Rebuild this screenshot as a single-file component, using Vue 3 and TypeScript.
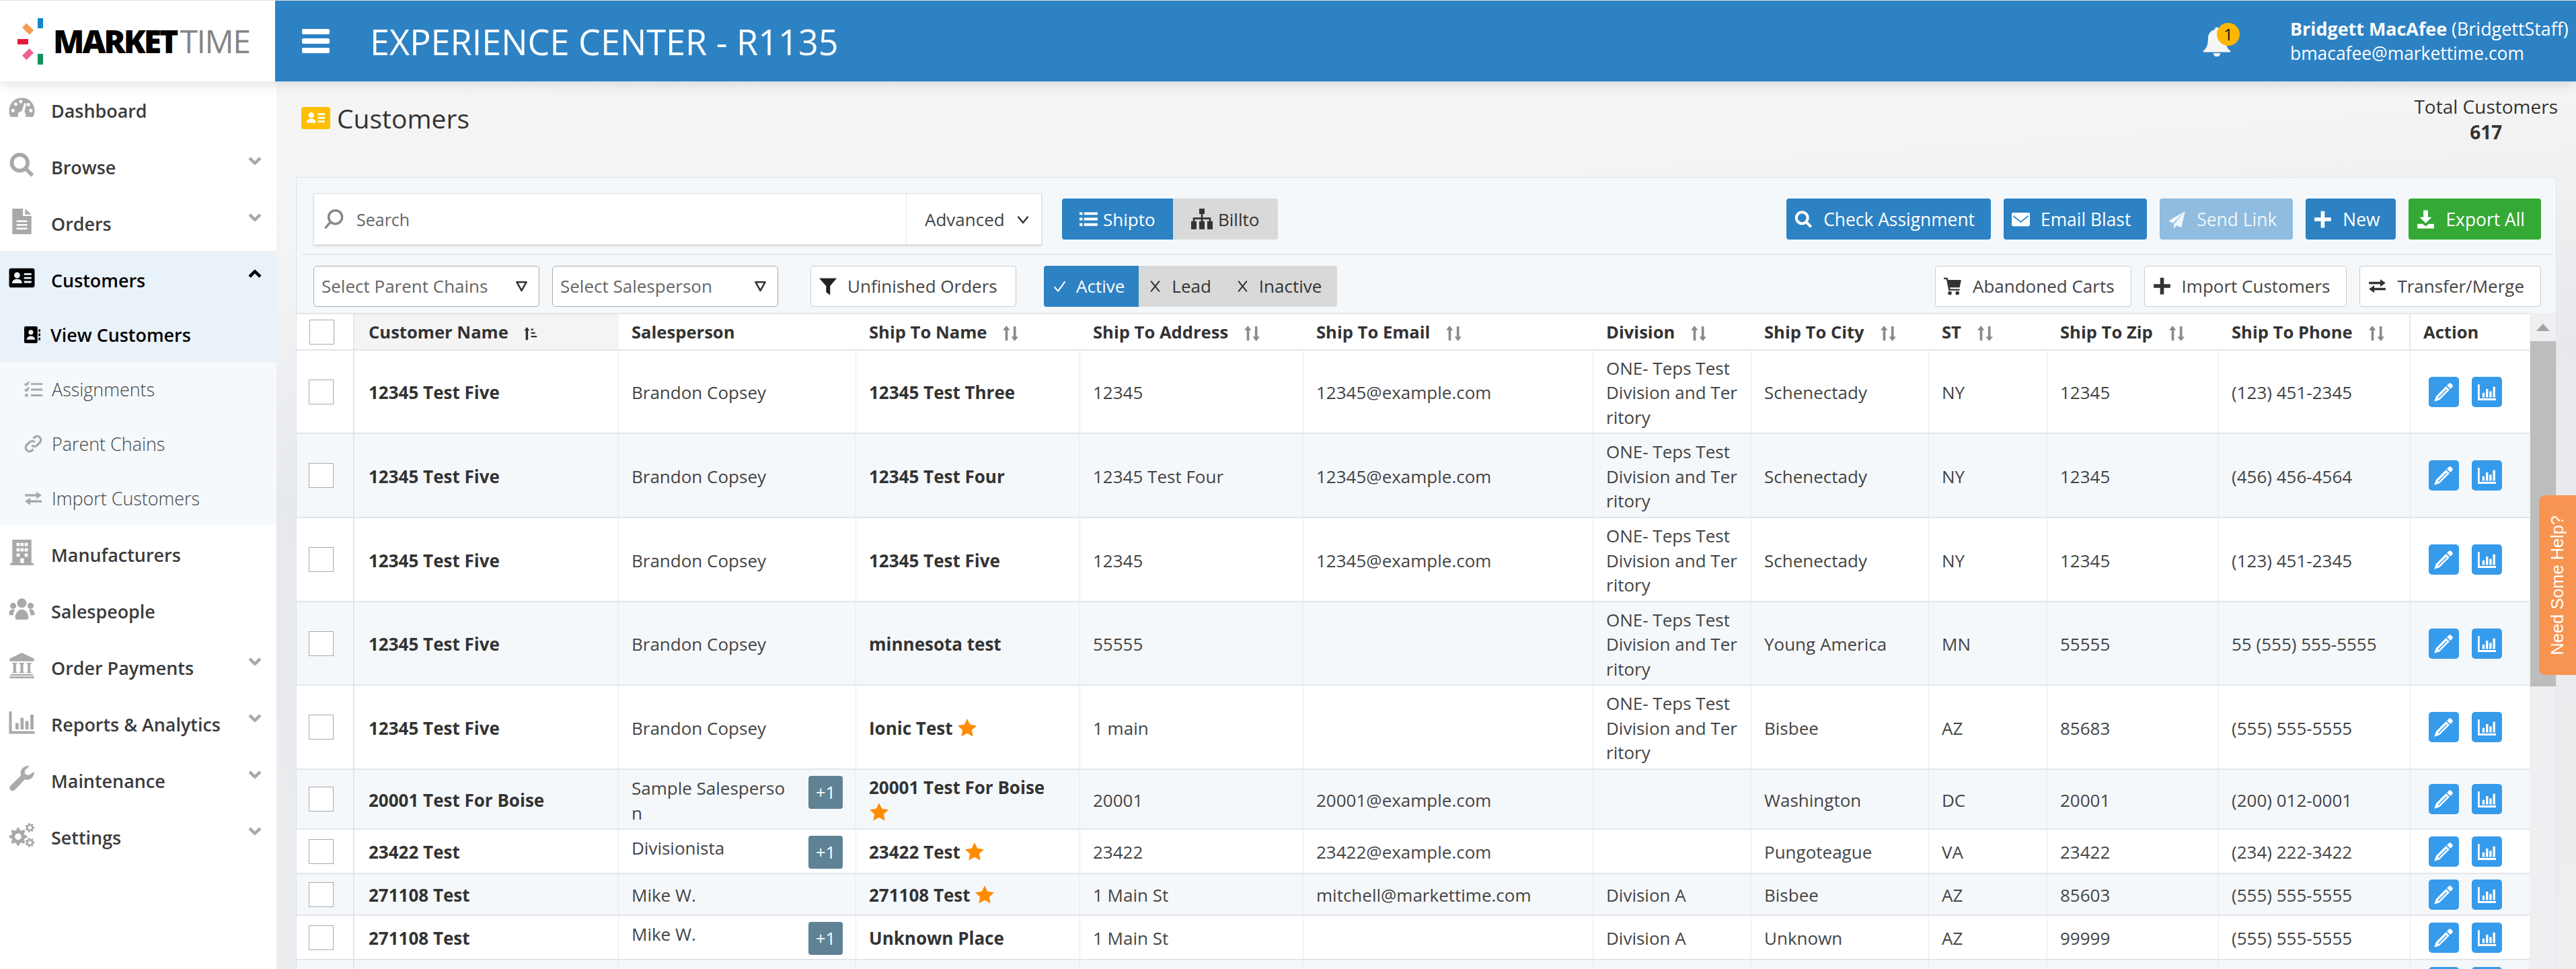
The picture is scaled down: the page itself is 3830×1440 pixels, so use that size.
<script setup lang="ts">
import { h } from 'vue';

// circle as a sub path, so it can be cut out of a filled shape
const circ = (x: number, y: number, r: number) =>
  `M${x - r} ${y}a${r} ${r} 0 1 0 ${2 * r} 0a${r} ${r} 0 1 0 ${-2 * r} 0z`;

const gear = (cx: number, cy: number, r: number, teeth: number) => {
  let d = '';
  const step = (Math.PI * 2) / (teeth * 4);
  for (let i = 0; i < teeth * 4; i++) {
    const rad = i % 4 < 2 ? r : r * 0.74;
    const a = step * i - step / 2;
    d += `${i ? 'L' : 'M'}${(cx + rad * Math.cos(a)).toFixed(2)} ${(cy + rad * Math.sin(a)).toFixed(2)}`;
  }
  return `${d}z${circ(cx, cy, r * 0.36)}`;
};

const cardMark =
  `${circ(7.5, 9.5, 2.8)}M2.8 17c0-2.6 2-3.9 4.7-3.9s4.7 1.3 4.7 3.9z` +
  'M14 7.5h7v1.8h-7zM14 11.2h7V13h-7zM14 14.9h7v1.8h-7z';
const chart = 'M0 2h2.5v18.5H24V23H0zM6 13h3v6H6zM10.7 8h3v11h-3zM15.3 11h3v8h-3zM20 5h3v14h-3z';

type Glyph = { f?: string; s?: string; w?: number };
const glyphs: Record<string, Glyph> = {
  gauge: {
    f:
      'M12 2C5.4 2 0 7.4 0 14c0 2.2.5 4.2 1.5 6h21c1-1.8 1.5-3.8 1.5-6C24 7.4 18.6 2 12 2z' +
      circ(3.6, 14, 1.6) + circ(6.2, 8, 1.6) + circ(11, 5.6, 1.6) + circ(20.4, 14, 1.6) + circ(18.2, 8.5, 1.6) +
      'M14.4 7l1.8.5-1.8 8c.8.6 1.3 1.6 1.3 2.7 0 .6-.1 1.2-.4 1.8H8.7c-.3-.6-.4-1.2-.4-1.8 0-2 1.6-3.4 3.6-3.5z',
  },
  search: { s: `${circ(10, 10, 7.5)}M15.5 15.5L22 22`, w: 3.6 },
  searchThin: { s: `${circ(14, 9.5, 7.5)}M8.5 15L2.5 22`, w: 2.6 },
  file: { f: 'M3 0h10v7h8v17H3zM15 0l6 5.5h-6zM7 11h10v1.6H7zM7 14.5h10v1.6H7zM7 18h10v1.6H7z' },
  idcard: { f: `M2 3h20a2 2 0 0 1 2 2v14a2 2 0 0 1-2 2H2a2 2 0 0 1-2-2V5a2 2 0 0 1 2-2z${cardMark}` },
  idmark: { f: cardMark },
  addrbook: {
    f:
      `M2 0h15a2 2 0 0 1 2 2v20a2 2 0 0 1-2 2H2a2 2 0 0 1-2-2V2a2 2 0 0 1 2-2z${circ(9.5, 8.5, 3.4)}` +
      'M3.5 19c0-3.4 2.6-5.2 6-5.2s6 1.8 6 5.2zM20.5 4H23v4h-2.5zM20.5 10H23v4h-2.5zM20.5 16H23v4h-2.5z',
  },
  tasks: { f: circ(3, 20, 2.2), s: 'M9 5h15M9 12.5h15M9 20h15M.8 4.5l2 2 3.4-4.4M.8 12l2 2 3.4-4.4', w: 2.6 },
  link: { s: 'M10 14a5 5 0 0 0 7 0l4-4a5 5 0 0 0-7-7l-2 2M14 10a5 5 0 0 0-7 0l-4 4a5 5 0 0 0 7 7l2-2', w: 3 },
  exchange: { f: 'M1 6.5h15V3l7 5-7 5V9.5H1zM23 14.5H8V11l-7 5 7 5v-3.5h15z' },
  building: {
    f:
      'M3 0h18v22H3zM7 3h3v3H7zM10.8 3h3v3h-3zM14.6 3h3v3h-3zM7 8h3v3H7zM10.8 8h3v3h-3zM14.6 8h3v3h-3zM7 13h3v3H7zM14.6 13h3v3h-3zM10.5 17.5h3.5V22h-3.5zM1 22h22v2H1z',
  },
  users: {
    f:
      circ(12, 6.5, 4.4) + circ(3.8, 9, 2.9) + circ(20.2, 9, 2.9) +
      'M5.8 20.5c0-4.5 2.5-8 6.2-8s6.2 3.5 6.2 8c0 1-.8 1.5-1.8 1.5H7.6c-1 0-1.8-.5-1.8-1.5z' +
      'M0 16.5c0-2.6 1.5-4.2 3.8-4.2.7 0 1.3.2 1.7.5-1 1.4-1.5 3-1.7 5H1c-.6 0-1-.5-1-1.3z' +
      'M24 16.5c0-2.6-1.5-4.2-3.8-4.2-.7 0-1.3.2-1.7.5 1 1.4 1.5 3 1.7 5H23c.6 0 1-.5 1-1.3z',
  },
  bank: {
    f:
      'M12 0l11.5 5.5V8H.5V5.5zM3 9.5h4.5v1h-1V18h1v1H3v-1h1v-7.5H3zM9.7 9.5h4.6v1h-1V18h1v1H9.7v-1h1v-7.5h-1zM16.5 9.5H21v1h-1V18h1v1h-4.5v-1h1v-7.5h-1zM1.5 20h21v1.5h-21zM.5 22.3h23V24H.5z',
  },
  chart: { f: chart },
  wrench: {
    f:
      'M23.5 5.5c.4 3-1.5 6.5-5 7.5-1.4.4-2.6.2-3.8-.2L5.5 22.5c-1.3 1.3-3.2 1.2-4.2.2s-1.2-3 .2-4.3l9.7-9.2c-.5-1.3-.6-2.7-.2-4C12 1.8 15.5-.2 19 .3l-4.5 4.5.7 3.3 3.3.8z',
  },
  cogs: { f: gear(8.5, 13.5, 8.5, 8) + gear(19.5, 5, 4.5, 7) + gear(19.5, 19, 4.5, 7) },
  chevron: { s: 'M2.5 7l9.5 9.5L21.5 7', w: 5.5 },
  chevronUp: { s: 'M2.5 17L12 7.5l9.5 9.5', w: 5.5 },
  vee: { s: 'M3 7l9 11 9-11', w: 3 },
  caret: { s: 'M3 4h18L12 20z', w: 3.2 },
  funnel: { f: 'M0 1h24l-9 10.5V24l-5.5-4V11.5z' },
  list: { f: 'M0 3h4v3.5H0zM6 3h18v3.5H6zM0 10.3h4v3.5H0zM6 10.3h18v3.5H6zM0 17.5h4V21H0zM6 17.5h18V21H6z' },
  sitemap: {
    f: 'M9 0h6v6H9zM11 6h2v4h9v4h-2v-2h-7v2h-2v-2H4v2H2v-4h9zM0 14h6v9H0zM9 14h6v9H9zM18 14h6v9h-6z',
  },
  check: { s: 'M2 13l7 8L22 3', w: 2.6 },
  cross: { s: 'M4 2l16 20M20 2L4 22', w: 2.6 },
  mail: {
    f: 'M2 3h20a2 2 0 0 1 2 2v14a2 2 0 0 1-2 2H2a2 2 0 0 1-2-2V5a2 2 0 0 1 2-2zM2 6.5l10 8 10-8v2l-10 8-10-8z',
  },
  plane: { f: 'M23 1L1 14l6 3zM23 1L8 18.5V24l4-4 6 3z' },
  plus: { f: 'M9.5 1h5v8.5H23v5h-8.5V23h-5v-8.5H1v-5h8.5z' },
  download: { f: 'M9 0h6v9h5l-8 8-8-8h5zM1 18h7l4 3 4-3h7v6H1z' },
  cart: { f: `M0 1h5l1 3h17l-2 10H8l.5 2H21v2H6.5L3.5 3H0z${circ(8, 21.3, 2.5)}${circ(18, 21.3, 2.5)}` },
  pencil: {
    f:
      'M17.5 2.5a2 2 0 0 1 3 0l1 1a2 2 0 0 1 0 3l-2 2-4-4zM14.5 5.5l4 4L7 21l-6 2 2-6z' +
      'M15 8.7l.8.8-9.8 9.8-.8-.8z',
  },
  sortBoth: { f: 'M6 1l5 6.5H8V22H4.5V7.5H1zM18 23l-5-6.5h3.2V2h3.5v14.5H23z' },
  sortAsc: { f: 'M5 1l4.5 6H7v16H3V7H.5zM12 4h4v2.5h-4zM12 10h7v2.5h-7zM12 16h10v2.5H12z' },
  bell: {
    f:
      'M12 0a1.6 1.6 0 0 1 1.6 1.8C17 2.6 19.5 5.5 19.5 9.5c0 6 1.5 8.5 4 10.5v1.2H.5V20c2.5-2 4-4.5 4-10.5 0-4 2.5-6.9 5.9-7.7A1.6 1.6 0 0 1 12 0zM9 22a3 3 0 0 0 6 0z',
  },
  star: { f: 'M12 0l3.6 7.6 8.4 1.1-6.1 5.8 1.6 8.3L12 18.7l-7.5 4.1 1.6-8.3L0 8.7l8.4-1.1z' },
};

const Icon = (props: { name: string }) => {
  const g = glyphs[props.name];
  return h('svg', { viewBox: '0 0 24 24', class: 'ico' }, [
    g.f ? h('path', { d: g.f, fill: 'currentColor', 'fill-rule': 'evenodd' }) : null,
    g.s
      ? h('path', {
          d: g.s,
          fill: 'none',
          stroke: 'currentColor',
          'stroke-width': g.w,
          'stroke-linejoin': 'round',
        })
      : null,
  ]);
};

const nav = [
  { icon: 'gauge', label: 'Dashboard' },
  { icon: 'search', label: 'Browse', more: true },
  { icon: 'file', label: 'Orders', more: true },
  {
    icon: 'idcard',
    label: 'Customers',
    open: true,
    subs: [
      { icon: 'addrbook', label: 'View Customers', current: true },
      { icon: 'tasks', label: 'Assignments' },
      { icon: 'link', label: 'Parent Chains' },
      { icon: 'exchange', label: 'Import Customers' },
    ],
  },
  { icon: 'building', label: 'Manufacturers' },
  { icon: 'users', label: 'Salespeople' },
  { icon: 'bank', label: 'Order Payments', more: true },
  { icon: 'chart', label: 'Reports & Analytics', more: true },
  { icon: 'wrench', label: 'Maintenance', more: true },
  { icon: 'cogs', label: 'Settings', more: true },
];

const actions = [
  { icon: 'search', label: 'Check Assignment' },
  { icon: 'mail', label: 'Email Blast' },
  { icon: 'plane', label: 'Send Link', kind: 'faded' },
  { icon: 'plus', label: 'New' },
  { icon: 'download', label: 'Export All', kind: 'green' },
];
const secondary = [
  { icon: 'cart', label: 'Abandoned Carts' },
  { icon: 'plus', label: 'Import Customers' },
  { icon: 'exchange', label: 'Transfer/Merge' },
];

const columns = [
  { label: '', w: 86 },
  { label: 'Customer Name', w: 393, sort: 'sortAsc', current: true },
  { label: 'Salesperson', w: 353 },
  { label: 'Ship To Name', w: 333, sort: 'sortBoth' },
  { label: 'Ship To Address', w: 332, sort: 'sortBoth' },
  { label: 'Ship To Email', w: 431, sort: 'sortBoth' },
  { label: 'Division', w: 235, sort: 'sortBoth' },
  { label: 'Ship To City', w: 264, sort: 'sortBoth' },
  { label: 'ST', w: 176, sort: 'sortBoth' },
  { label: 'Ship To Zip', w: 255, sort: 'sortBoth' },
  { label: 'Ship To Phone', w: 285, sort: 'sortBoth' },
  { label: 'Action', w: 177 },
];

const division = 'ONE- Teps Test Division and Territory';
const brandon = 'Brandon Copsey';
const rows = [
  { h: 124, customer: '12345 Test Five', sales: brandon, name: '12345 Test Three', addr: '12345', email: '12345@example.com', div: division, city: 'Schenectady', st: 'NY', zip: '12345', phone: '(123) 451-2345' },
  { h: 125, customer: '12345 Test Five', sales: brandon, name: '12345 Test Four', addr: '12345 Test Four', email: '12345@example.com', div: division, city: 'Schenectady', st: 'NY', zip: '12345', phone: '(456) 456-4564' },
  { h: 125, customer: '12345 Test Five', sales: brandon, name: '12345 Test Five', addr: '12345', email: '12345@example.com', div: division, city: 'Schenectady', st: 'NY', zip: '12345', phone: '(123) 451-2345' },
  { h: 124, customer: '12345 Test Five', sales: brandon, name: 'minnesota test', addr: '55555', email: '', div: division, city: 'Young America', st: 'MN', zip: '55555', phone: '55 (555) 555-5555' },
  { h: 125, customer: '12345 Test Five', sales: brandon, name: 'Ionic Test', star: true, addr: '1 main', email: '', div: division, city: 'Bisbee', st: 'AZ', zip: '85683', phone: '(555) 555-5555' },
  { h: 89, customer: '20001 Test For Boise', sales: 'Sample Salesperson', extra: true, name: '20001 Test For Boise', star: true, addr: '20001', email: '20001@example.com', div: '', city: 'Washington', st: 'DC', zip: '20001', phone: '(200) 012-0001' },
  { h: 66, customer: '23422 Test', sales: 'Divisionista', extra: true, name: '23422 Test', star: true, addr: '23422', email: '23422@example.com', div: '', city: 'Pungoteague', st: 'VA', zip: '23422', phone: '(234) 222-3422' },
  { h: 62, customer: '271108 Test', sales: 'Mike W.', name: '271108 Test', star: true, addr: '1 Main St', email: 'mitchell@markettime.com', div: 'Division A', city: 'Bisbee', st: 'AZ', zip: '85603', phone: '(555) 555-5555' },
  { h: 66, customer: '271108 Test', sales: 'Mike W.', extra: true, name: 'Unknown Place', addr: '1 Main St', email: '', div: 'Division A', city: 'Unknown', st: 'AZ', zip: '99999', phone: '(555) 555-5555' },
  { h: 66, customer: '', sales: '', name: '', addr: '', email: '', div: '', city: '', st: '', zip: '', phone: '' },
];
</script>

<template>
  <div class="app">
    <header class="topbar">
      <div class="logo">
        <svg class="logo-mark" viewBox="0 0 40 70">
          <rect x="30" y="0" width="8" height="15" fill="#1486c9" />
          <rect x="8" y="11.5" width="15" height="9" fill="#f9994d" transform="rotate(45 15.5 16)" />
          <rect x="0" y="31" width="16" height="8" fill="#e5193a" />
          <rect x="8" y="49" width="15" height="9" fill="#ec5f95" transform="rotate(-45 15.5 53.5)" />
          <rect x="30" y="53" width="8" height="16" fill="#17935a" />
        </svg>
        <span class="logo-text"><b>MARKET</b><i>TIME</i></span>
      </div>
      <div class="bar">
        <button class="burger"><span /><span /><span /></button>
        <h1 class="bar-title">EXPERIENCE CENTER - R1135</h1>
        <div class="bell">
          <Icon name="bell" class="bell-ico" />
          <span class="bell-count">1</span>
        </div>
        <div class="user">
          <div><b>Bridgett MacAfee</b> (BridgettStaff)</div>
          <div class="user-mail">bmacafee@markettime.com</div>
        </div>
      </div>
    </header>

    <div class="body">
      <nav class="side">
        <template v-for="item in nav" :key="item.label">
          <a class="nav-item" :class="{ open: item.open }">
            <span class="nav-ico-box"><Icon :name="item.icon" class="nav-ico" /></span>
            <span class="nav-label">{{ item.label }}</span>
            <Icon v-if="item.more" name="chevron" class="nav-chev" />
            <Icon v-if="item.open" name="chevronUp" class="nav-chev up" />
          </a>
          <a
            v-for="sub in item.subs"
            :key="sub.label"
            class="sub-item"
            :class="{ current: sub.current }"
          >
            <Icon :name="sub.icon" class="sub-ico" />
            <span>{{ sub.label }}</span>
          </a>
        </template>
      </nav>

      <main class="main">
        <div class="page-head">
          <div class="page-title">
            <span class="title-badge"><Icon name="idmark" class="title-ico" /></span>
            <h2>Customers</h2>
          </div>
          <div class="total">
            <div>Total Customers</div>
            <b>617</b>
          </div>
        </div>

        <section class="panel">
          <div class="tools first">
            <div class="search">
              <Icon name="searchThin" class="search-ico" />
              <span class="search-text">Search</span>
              <span class="advanced">Advanced <Icon name="vee" class="adv-ico" /></span>
            </div>
            <div class="toggle">
              <span class="on shipto"><Icon name="list" class="tog-ico" />Shipto</span>
              <span class="billto"><Icon name="sitemap" class="tog-ico big" />Billto</span>
            </div>
            <div class="tool-right">
              <button v-for="a in actions" :key="a.label" class="act" :class="a.kind">
                <Icon :name="a.icon" class="act-ico" />{{ a.label }}
              </button>
            </div>
          </div>

          <div class="tools second">
            <div class="select">Select Parent Chains <Icon name="caret" class="caret" /></div>
            <div class="select">Select Salesperson <Icon name="caret" class="caret" /></div>
            <button class="outline unfinished"><Icon name="funnel" class="funnel" />Unfinished Orders</button>
            <div class="toggle status">
              <span class="on active"><Icon name="check" class="st-ico" />Active</span>
              <span class="lead"><Icon name="cross" class="st-ico" />Lead</span>
              <span class="inactive"><Icon name="cross" class="st-ico" />Inactive</span>
            </div>
            <div class="tool-right">
              <button v-for="s in secondary" :key="s.label" class="outline">
                <Icon :name="s.icon" class="out-ico" />{{ s.label }}
              </button>
            </div>
          </div>

          <div class="grid-wrap">
            <table class="grid">
              <colgroup>
                <col v-for="c in columns" :key="c.label" :style="{ width: c.w + 'px' }" />
              </colgroup>
              <thead>
                <tr>
                  <th v-for="(c, i) in columns" :key="c.label" :class="{ sorted: c.current, boxed: i === 0 || i === 10 }">
                    <span v-if="i === 0" class="box" />
                    <template v-else>
                      {{ c.label }}<Icon v-if="c.sort" :name="c.sort" class="sort" :class="{ dark: c.current }" />
                    </template>
                  </th>
                </tr>
              </thead>
              <tbody>
                <tr v-for="(r, idx) in rows" :key="idx" :style="{ height: r.h + 'px' }">
                  <td class="cell-box"><span class="box" /></td>
                  <td class="strong first-col">{{ r.customer }}</td>
                  <td :class="{ 'has-more': r.extra }">
                    <div v-if="r.extra" class="sales">
                      <span class="sales-name">{{ r.sales }}</span>
                      <span class="more-badge">+1</span>
                    </div>
                    <template v-else>{{ r.sales }}</template>
                  </td>
                  <td class="strong">
                    {{ r.name }}
                    <Icon v-if="r.star" name="star" class="star" />
                  </td>
                  <td>{{ r.addr }}</td>
                  <td>{{ r.email }}</td>
                  <td class="wrap">{{ r.div }}</td>
                  <td>{{ r.city }}</td>
                  <td>{{ r.st }}</td>
                  <td>{{ r.zip }}</td>
                  <td>{{ r.phone }}</td>
                  <td class="cell-actions">
                    <span class="row-btn"><Icon name="pencil" class="pen-ico" /></span>
                    <span class="row-btn"><Icon name="chart" class="row-ico" /></span>
                  </td>
                </tr>
              </tbody>
            </table>
            <div class="sbar">
              <span class="sbar-up" />
              <span class="sbar-thumb" />
            </div>
          </div>
        </section>
      </main>
    </div>

    <div class="help"><span>Need Some Help?</span></div>
  </div>
</template>

<style scoped>
.app {
  position: relative;
  width: 3830px;
  height: 1440px;
  padding-top: 1px;
  box-sizing: border-box;
  display: flex;
  flex-direction: column;
  overflow: hidden;
  background: #e6e6e6;
  font-family: "Open Sans", sans-serif;
  font-size: 25.6px;
  color: #444;
}
.ico {
  display: block;
  flex: none;
  width: 24px;
  height: 24px;
}

/* top bar */
.topbar {
  position: relative;
  z-index: 2;
  display: flex;
  height: 120px;
  flex: none;
  box-shadow: 0 6px 16px rgba(0, 0, 0, 0.1);
}
.logo {
  width: 409px;
  flex: none;
  background: #fff;
  display: flex;
  align-items: center;
  padding-left: 26px;
  box-sizing: border-box;
}
.logo-mark {
  width: 40px;
  height: 70px;
  flex: none;
  margin-top: 1px;
}
.logo-text {
  margin-left: 13px;
  font-size: 48px;
  line-height: 1;
  display: flex;
}
.logo-text b {
  font-weight: 800;
  color: #000;
  letter-spacing: -3px;
}
.logo-text i {
  font-style: normal;
  font-weight: 400;
  color: #858585;
  margin-left: 5px;
  letter-spacing: -1.4px;
}
.bar {
  flex: 1;
  background: #2d82c4;
  color: #fff;
  display: flex;
  align-items: center;
  padding-left: 40px;
}
.burger {
  width: 41px;
  height: 36px;
  padding: 0;
  border: 0;
  background: none;
  display: flex;
  flex-direction: column;
  justify-content: space-between;
}
.burger span {
  display: block;
  height: 8px;
  border-radius: 2px;
  background: #fff;
}
.bar-title {
  margin: 0 0 0 60px;
  flex: 1;
  font-size: 52.2px;
  font-weight: 400;
  white-space: nowrap;
}
.bell {
  position: relative;
  width: 42px;
  height: 45px;
  margin-right: 88px;
}
.bell-ico {
  width: 42px;
  height: 45px;
  color: #f6f6f6;
}
.bell-count {
  position: absolute;
  left: 21px;
  top: -5px;
  width: 34px;
  height: 34px;
  border-radius: 50%;
  background: #ffb703;
  color: #111;
  font-size: 24px;
  line-height: 34px;
  text-align: center;
}
.user {
  width: 425px;
  flex: none;
  font-size: 26.9px;
  line-height: 36.5px;
  white-space: nowrap;
}
.user b {
  font-weight: 700;
}
.user-mail {
  font-size: 26.4px;
}

/* side navigation */
.body {
  flex: 1;
  min-height: 0;
  display: flex;
}
.side {
  width: 411px;
  flex: none;
  background: #fff;
  font-size: 26.9px;
}
.nav-item {
  height: 84px;
  display: flex;
  align-items: center;
  padding: 2px 0 0 13px;
  box-sizing: border-box;
  font-weight: 600;
  color: #3b3b3b;
}
.nav-item.open {
  background: #eaf2f9;
  color: #000;
}
.nav-ico-box {
  width: 63px;
  flex: none;
  color: #a9a9a9;
}
.open .nav-ico-box {
  color: #000;
}
.nav-ico {
  width: 39px;
  height: 38px;
  margin-top: -6px;
}
.nav-label {
  flex: 1;
}
.nav-chev {
  width: 20px;
  height: 20px;
  margin: -19px 22px 0 0;
  color: #a9a9a9;
}
.nav-chev.up {
  color: #000;
}
.sub-item {
  height: 81px;
  display: flex;
  align-items: center;
  gap: 14px;
  padding-left: 36px;
  background: #f5f9fb;
  font-weight: 300;
  color: #444;
}
.sub-item.current {
  background: #eaf2f9;
  color: #000;
  font-weight: 600;
}
.sub-ico {
  width: 27px;
  height: 27px;
  color: #a9a9a9;
}
.current .sub-ico {
  color: #000;
  width: 25px;
}

/* page */
.main {
  flex: 1;
  min-width: 0;
  padding: 0 29px;
  display: flex;
  flex-direction: column;
  background: linear-gradient(176deg, #f5f5f5 0, #f4f4f4 260px, #e8e9ed 620px, #eeeef0 1500px);
}
.page-head {
  height: 142px;
  flex: none;
  display: flex;
  justify-content: space-between;
}
.page-title {
  display: flex;
  align-items: center;
  height: 108px;
  padding-left: 8px;
}
.title-badge {
  width: 43px;
  height: 33px;
  border-radius: 4px;
  background: #ffbf00;
  color: #fff;
  display: flex;
  align-items: center;
  justify-content: center;
}
.title-ico {
  width: 43px;
  height: 36px;
}
.page-title h2 {
  margin: 0 0 0 10px;
  font-size: 39px;
  font-weight: 400;
  color: #333;
}
.total {
  margin: 18px -2px 0 0;
  font-size: 28px;
  line-height: 38px;
  text-align: center;
  color: #333;
}
.total b {
  font-weight: 700;
}

/* panel and toolbars */
.panel {
  flex: 1;
  min-height: 0;
  display: flex;
  flex-direction: column;
  background: #f5f8fb;
  border: 1px solid #d9e3ee;
  border-bottom: 0;
}
.tools {
  display: flex;
  align-items: center;
  padding-right: 22px;
  padding-left: 25px;
  flex: none;
}
.tools.first {
  height: 115px;
  padding-top: 8px;
  box-sizing: border-box;
  position: relative;
}
.tools.first::after {
  content: "";
  position: absolute;
  left: 9px;
  right: 7px;
  bottom: 0;
  height: 2px;
  background: #dfe5ea;
}
.tools.second {
  height: 86px;
  padding-top: 6px;
  box-sizing: border-box;
}
.tool-right {
  margin-left: auto;
  display: flex;
  gap: 19px;
}
.search {
  width: 1083px;
  height: 77px;
  box-sizing: border-box;
  display: flex;
  align-items: center;
  background: #fff;
  border: 1px solid #dcdfe3;
  box-shadow: 0 2px 3px rgba(0, 0, 0, 0.12);
  color: #666;
}
.search-ico {
  width: 32px;
  height: 32px;
  margin: 0 18px 0 13px;
  color: #888;
}
.search-text {
  flex: 1;
  font-size: 25px;
}
.advanced {
  width: 201px;
  height: 100%;
  box-sizing: border-box;
  border-left: 1px solid #e3e6e9;
  display: flex;
  align-items: center;
  padding-left: 27px;
  gap: 17px;
  font-size: 26px;
  color: #444;
}
.adv-ico {
  width: 20px;
  height: 20px;
  color: #333;
}
.toggle {
  display: flex;
  height: 61px;
  margin-left: 30px;
  border-radius: 4px;
  overflow: hidden;
  background: #d9d9d9;
  font-size: 26px;
  color: #333;
}
.toggle span {
  display: flex;
  align-items: center;
  box-sizing: border-box;
}
.toggle .on {
  background: #2d82c4;
  color: #fff;
}
.shipto {
  width: 165px;
  padding-left: 26px;
  gap: 8px;
}
.billto {
  width: 156px;
  padding-left: 27px;
  gap: 8px;
}
.tog-ico {
  width: 27px;
  height: 27px;
}
.tog-ico.big {
  width: 32px;
  height: 32px;
}
.act,
.outline {
  height: 61px;
  padding: 0 24px 0 12px;
  display: flex;
  align-items: center;
  gap: 16px;
  border-radius: 4px;
  font-family: inherit;
  font-size: 26px;
  white-space: nowrap;
}
.act {
  border: 0;
  background: #2d82c4;
  color: #fff;
  font-size: 26.4px;
}
.act.faded {
  background: #90bcdf;
  color: #eef5fb;
}
.act.green {
  background: #35a935;
}
.act-ico {
  width: 27px;
  height: 30px;
}
.outline {
  background: #fff;
  border: 1px solid #ccc;
  color: #444;
}
.out-ico {
  width: 27px;
  height: 28px;
  color: #333;
}
.select {
  width: 336px;
  height: 61px;
  margin-right: 19px;
  padding: 0 16px 0 11px;
  box-sizing: border-box;
  display: flex;
  align-items: center;
  justify-content: space-between;
  background: #fff;
  border: 1px solid #aaa;
  border-radius: 5px;
  color: #666;
  font-size: 26px;
  white-space: nowrap;
}
.caret {
  width: 19px;
  height: 19px;
  color: #333;
}
.unfinished {
  width: 306px;
  margin-left: 29px;
  font-size: 26px;
}
.funnel {
  width: 26px;
  height: 27px;
  color: #222;
}
.status {
  margin-left: 41px;
}
.status span {
  gap: 15px;
}
.status .active {
  padding: 0 21px 0 14px;
}
.status .lead {
  padding: 0 22px 0 15px;
}
.status .inactive {
  padding: 0 23px 0 15px;
}
.st-ico {
  width: 19px;
  height: 19px;
}

/* table */
.grid-wrap {
  flex: 1;
  min-height: 0;
  display: flex;
  background: #efeff1;
  overflow: hidden;
}
.grid {
  width: 3320px;
  flex: none;
  table-layout: fixed;
  border-collapse: separate;
  border-spacing: 0;
  align-self: flex-start;
  background: #fff;
}
.grid th {
  height: 56px;
  box-sizing: border-box;
  padding: 0 0 0 19px;
  text-align: left;
  font-weight: 700;
  color: #333;
  white-space: nowrap;
  background: #fff;
  border-top: 2px solid #e1e5ea;
  border-bottom: 2px solid #e1e5ea;
}
.grid th.sorted {
  background: #f4f4f4;
  padding-left: 21px;
}
.grid th.boxed {
  border-right: 2px solid #e1e5ea;
}
.sort {
  display: inline-block;
  width: 25px;
  height: 25px;
  margin-left: 23px;
  vertical-align: -5px;
  color: #8a8a8a;
}
.sort.dark {
  width: 21px;
  height: 21px;
  vertical-align: -3px;
  color: #333;
}
.grid td {
  padding: 3px 18px 0 19px;
  font-size: 26px;
  line-height: 36.6px;
  border-bottom: 2px solid #e1e5ea;
  border-right: 1px solid #e6e9ed;
  box-sizing: border-box;
  color: #444;
}
.grid tbody tr:nth-child(even) td {
  background: #f5f8fb;
}
.grid td.strong {
  font-weight: 700;
  color: #333;
  padding-right: 22px;
}
.grid td.first-col {
  padding-left: 21px;
}
.grid td.wrap {
  word-break: break-all;
  padding-right: 14px;
}
.grid td.has-more {
  vertical-align: top;
  padding-top: 9px;
  padding-right: 19px;
}
.grid td.cell-box {
  padding: 0 0 0 18px;
  border-right: 2px solid #e1e5ea;
}
.box {
  display: block;
  width: 37px;
  height: 37px;
  box-sizing: border-box;
  border: 1.5px solid #aaa;
  background: #fff;
}
.sales {
  display: flex;
  justify-content: space-between;
  gap: 10px;
}
.sales-name {
  width: 240px;
  word-break: break-all;
}
.more-badge {
  width: 51px;
  height: 49px;
  flex: none;
  border-radius: 4px;
  background: #5f8295;
  color: #fff;
  line-height: 49px;
  text-align: center;
}
.star {
  display: inline-block;
  width: 30px;
  height: 28px;
  vertical-align: -4px;
  color: #ff8c00;
}
.grid td.cell-actions {
  padding: 0 0 0 27px;
  border-right: 0;
  white-space: nowrap;
}
.row-btn {
  display: inline-flex;
  align-items: center;
  justify-content: center;
  width: 45px;
  height: 45px;
  margin-right: 19px;
  vertical-align: middle;
  border-radius: 5px;
  background: #369beb;
  color: #fff;
}
.row-ico {
  width: 27px;
  height: 27px;
}
.pen-ico {
  width: 31px;
  height: 31px;
}
.sbar {
  flex: 1;
  display: flex;
  flex-direction: column;
  align-items: center;
  padding-top: 16px;
}
.sbar-up {
  width: 0;
  height: 0;
  border: 10px solid transparent;
  border-top: 0;
  border-bottom: 11px solid #a3a3a3;
}
.sbar-thumb {
  width: 38px;
  height: 513px;
  margin-top: 15px;
  background: #bdbdbd;
}

/* floating help tab */
.help {
  position: absolute;
  right: 0;
  top: 736px;
  width: 55px;
  height: 267px;
  border-radius: 9px 0 0 9px;
  background: #f79452;
  color: #fff;
  display: flex;
  align-items: center;
  justify-content: center;
  font-family: "Liberation Sans", sans-serif;
  font-size: 25.4px;
  white-space: nowrap;
}
.help span {
  writing-mode: vertical-rl;
  transform: rotate(180deg);
}
</style>
<style>
html,
body {
  margin: 0;
  padding: 0;
}
</style>
